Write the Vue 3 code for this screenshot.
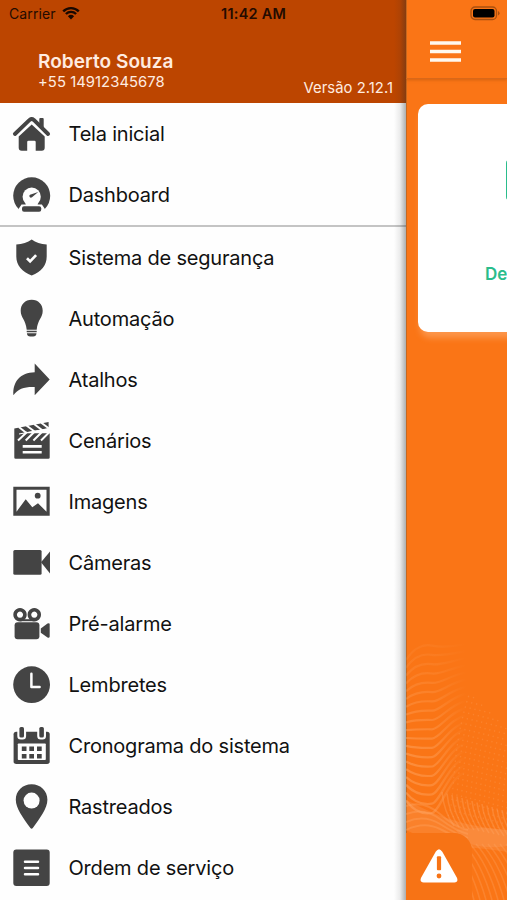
<script setup>
const mainItems = [
  { label: 'Tela inicial', icon: 'home' },
  { label: 'Dashboard', icon: 'gauge' },
]
const moreItems = [
  { label: 'Sistema de segurança', icon: 'shield' },
  { label: 'Automação', icon: 'bulb' },
  { label: 'Atalhos', icon: 'arrow' },
  { label: 'Cenários', icon: 'clapper' },
  { label: 'Imagens', icon: 'image' },
  { label: 'Câmeras', icon: 'camera' },
  { label: 'Pré-alarme', icon: 'film' },
  { label: 'Lembretes', icon: 'clock' },
  { label: 'Cronograma do sistema', icon: 'calendar' },
  { label: 'Rastreados', icon: 'pin' },
  { label: 'Ordem de serviço', icon: 'list' },
]

// icons are drawn in a 37 x 44 box; currentColor is the glyph, .w / .wl are knocked out in white
const icons = {
  home: `<path d="M1.900 22 16.600 7.900q2.100-1.800 4.200 0L35.100 22" fill="none" stroke="currentColor" stroke-width="3.900" stroke-linecap="round" stroke-linejoin="round"/>
    <path d="M26.300 12V7q0-1 1-1h2.400q1 0 1 1v10z"/>
    <path d="M18.700 12.500 31.700 24.500v11.200q0 3-3 3h-6V30q0-1.300-1.300-1.300h-5.900q-1.300 0-1.300 1.300v8.700H8.700q-3 0-3-3V24.500z"/>`,
  gauge: `<circle cx="18.700" cy="22.800" r="18.500"/><circle class="w" cx="18.700" cy="23.700" r="9.100"/>
    <path class="w" d="M14.500 29h8.400l2 2.500h4l3 4.500v7H5.500v-7l3-4.500h4z"/>
    <rect x="9" y="33.200" width="19.200" height="5.600" rx="2"/>
    <path d="M17 21.700 25.200 19 19 24.300a1.600 1.600 0 1 1-2-2.600z"/>`,
  shield: `<path d="M18.700 3.500c4 3 9 4.600 15 5v12c0 9-5.500 15.200-15 19-9.500-3.800-15.400-10-15.400-19v-12c6-.4 11.400-2 15.400-5z"/>
    <path class="wl" d="M14 22.300l3.100 3.100 6-6.300" stroke-width="2.700"/>`,
  bulb: `<path d="M18.700 2.700c6.600 0 11 4.700 11 11 0 7.300-5 8.500-6 19H13.700c-1-10.500-6-11.700-6-19 0-6.300 4.400-11 11-11z"/>
    <path d="M13.700 33.800h10v1.500h-10zM13.900 36.200h9.600q-.3 3.200-3.400 3.200h-2.800q-3.100 0-3.400-3.200z"/>`,
  arrow: `<path d="M21.700 5.600 36.700 21.600 21.700 37.300V29C12 28.600 5 30.500.4 37.300-.5 23.500 7.500 14.700 21.700 14.300z"/>`,
  clapper: `<path d="M1.300 9.400 35.600 2.900v6.300L9 14.300h27.700v24.100q0 1.300-1.300 1.300H2.600q-1.300 0-1.300-1.300z"/>
    <path class="wl" stroke-width="2" d="M5.800 8l8 6.200M13.500 6.500l8 6M21 5l8 6M28.300 3.700l8 6M5 21.500l9-8.500M12.700 21.500l8.500-8.500M20.400 21.500l8.500-8.500M28 21.500l8.500-8.500"/>
    <path class="wl" stroke-width="1" d="M6 15 37 9.300"/>
    <path class="wl" stroke-width="2.600" d="M9.700 27.400h19M9.700 33.300h19"/>`,
  image: `<path fill-rule="evenodd" d="M.3 6.700h36.400v29H.3zM3.500 9.700v22l9.200-12.500 6.600 8 5.700-4 8.500 8.500v-22z"/><circle cx="24.700" cy="15.700" r="2.900"/>`,
  camera: `<rect x=".3" y="9" width="28.300" height="24.700" rx="1.500"/><path d="M28 21.300 37 10.500v22z"/>`,
  film: `<path fill-rule="evenodd" d="M7 6a6.700 6.700 0 1 0 .01 0zM7 9.600a3.100 3.100 0 1 1-.01 0zM21.300 6a6.700 6.700 0 1 0 .01 0zM21.300 9.600a3.100 3.100 0 1 1-.01 0z"/>
    <path d="M7 17.200h14.300v2H7z"/>
    <rect x="1.600" y="20.300" width="24.800" height="17" rx="3"/><path d="M27.800 26.500 34.500 21.600q2.200-1 2.200.8v12.200q0 1.800-2.200.8L27.800 30.800z"/>`,
  clock: `<circle cx="18.600" cy="21.700" r="18.400"/><path class="wl" stroke-width="2.500" stroke-linecap="round" stroke-linejoin="round" d="M18.400 10.700v13.400h8.200"/>`,
  calendar: `<rect x=".6" y="7.700" width="36.100" height="32.300" rx="2.600"/>
    <rect class="w" x="4.300" y="1" width="8.800" height="14.500" rx="3.500"/><rect class="w" x="24.200" y="1" width="8.800" height="14.500" rx="3.500"/>
    <rect x="6.400" y="3" width="4.600" height="10.600" rx="1.600"/><rect x="26.300" y="3" width="4.600" height="10.600" rx="1.600"/>
    <rect class="w" x="4.800" y="19.400" width="28" height="16.600" rx=".8"/>
    <path d="M8.800 22.400h4.700v4.700H8.800zM16.300 22.400h4.700v4.700h-4.700zM24 22.400h4.700v4.700H24zM8.800 29.900h4.700v4.700H8.800zM16.300 29.900h4.700v4.700h-4.700zM24 29.900h4.700v4.700H24z"/>`,
  pin: `<path d="M18.600-.7c9 0 15.800 6.500 15.800 15.500 0 8.500-7.200 18-14.600 28.200q-1.200 1.300-2.400 0C10 32.800 2.800 23.300 2.800 14.800 2.800 5.800 9.600-.7 18.600-.7z"/><circle class="w" cx="18.600" cy="15.600" r="8"/>`,
  list: `<rect x=".3" y="3.500" width="36.400" height="36.600" rx="3"/><path class="wl" stroke-width="2.500" stroke-linecap="round" d="M12 15.700h13M12 22h13M12 28.300h13"/>`,
}

// contour lines of the background mesh: nearly flat at the top, sagging further down
const waves = Array.from({ length: 19 }, (_, i) => {
  const t = i / 18
  const y = 20 + i * 7.8
  const sag = -16 + t * 30
  const rise = -13 - t * 12
  return {
    d: `M0 ${y} C8 ${y + sag * 0.8} 18 ${y + sag} 26 ${y + sag * 0.9} S44 ${y + rise} 60 ${y + rise - 3}`,
    o: Math.min(0.12 + i * 0.03, 0.45),
  }
})
const dots = Array.from({ length: 17 }, (_, i) => ({
  d: `M${42 + i * 5} ${176 + i * 1.2} C${50 + i * 4} ${160 + i} ${44 + i * 5} ${110 + i} ${64 + i * 4} ${52 + i * 4}`,
}))
const ridges = Array.from({ length: 15 }, (_, i) => ({
  d: `M${36 + i * 5} ${152 + i * 1.5} Q${38 + i * 5} ${172 + i} ${48 + i * 5} ${186 + i}`,
}))
const folds = Array.from({ length: 4 }, (_, i) => ({
  d: `M0 ${166 + i * 8} Q18 ${160 + i * 7} 34 ${174 + i * 5} T62 ${190 + i * 4}`,
}))
const slopes = Array.from({ length: 12 }, (_, i) => ({
  d: `M${40 + i * 6} 204 Q${58 + i * 6} 224 ${68 + i * 6} 260`,
}))
</script>

<template>
  <div class="screen">
    <aside class="drawer">
      <header class="profile">
        <div class="status">
          <span class="carrier">Carrier</span>
          <svg class="wifi" viewBox="0 0 18 14" width="18" height="14">
            <path d="M1.200 5.300a11.200 11.200 0 0 1 15.600 0M3.900 8a7.300 7.300 0 0 1 10.200 0" fill="none" stroke="#180800" stroke-width="2.400" />
            <path d="M9 13.500 5.900 10.200a4.600 4.600 0 0 1 6.200 0z" fill="#180800" />
          </svg>
          <span class="time">11:42 AM</span>
        </div>
        <div class="user">
          <div>
            <div class="name">Roberto Souza</div>
            <div class="phone">+55 14912345678</div>
          </div>
          <div class="version">Versão 2.12.1</div>
        </div>
      </header>
      <nav class="menu">
        <div v-for="item in mainItems" :key="item.icon" class="item">
          <svg class="icon" viewBox="0 0 37 44" v-html="icons[item.icon]" />
          <span>{{ item.label }}</span>
        </div>
      </nav>
      <nav class="menu more">
        <div v-for="item in moreItems" :key="item.icon" class="item">
          <svg class="icon" viewBox="0 0 37 44" v-html="icons[item.icon]" />
          <span>{{ item.label }}</span>
        </div>
      </nav>
      <div class="edge"></div>
    </aside>

    <main class="page">
      <svg class="mesh" viewBox="0 0 101 260" width="101" height="260">
        <defs>
          <linearGradient id="fade" x1="0" y1="0" x2="60" y2="0" gradientUnits="userSpaceOnUse">
            <stop offset="0" stop-color="#ffab6b" />
            <stop offset=".5" stop-color="#ffab6b" stop-opacity=".8" />
            <stop offset="1" stop-color="#ffab6b" stop-opacity="0" />
          </linearGradient>
        </defs>
        <path d="M0 160C25 172 50 186 101 190V212C70 206 40 210 0 190z" fill="#fff" opacity=".09" />
        <path d="M50 190Q75 186 101 190V206Q80 210 58 202z" fill="#fff" opacity=".08" />
        <path v-for="(w, i) in waves" :key="'w' + i" :d="w.d" :opacity="w.o" fill="none" stroke="url(#fade)" stroke-width="2.200" />
        <path v-for="(r, i) in dots" :key="'d' + i" :d="r.d" fill="none" stroke="#ffa563" opacity=".27" stroke-width="1.300" stroke-dasharray="1.500 4" />
        <path v-for="(r, i) in ridges" :key="'r' + i" :d="r.d" fill="none" stroke="#ffa563" opacity=".35" stroke-width="1.600" />
        <path v-for="(r, i) in folds" :key="'f' + i" :d="r.d" fill="none" stroke="#ffa563" opacity=".35" stroke-width="2" />
        <path v-for="(r, i) in slopes" :key="'s' + i" :d="r.d" fill="none" stroke="#ffa563" opacity=".3" stroke-width="1.600" />
      </svg>
      <header class="topbar">
        <svg class="battery" viewBox="0 0 31 15" width="31" height="15">
          <rect x="1" y="1" width="25.500" height="12.500" rx="4" fill="none" stroke="#a95010" stroke-width="1.300" />
          <rect x="3" y="3" width="21.500" height="8.500" rx="2" fill="#000" />
          <path d="M28 5q3.200 2.200 0 4.500z" fill="#a95010" />
        </svg>
        <svg class="burger" viewBox="0 0 31 22" width="31" height="22">
          <path d="M0 2h31M0 10.500h31M0 19h31" stroke="#fff8ee" stroke-width="3.400" />
        </svg>
      </header>
      <section class="card">
        <div class="tile"></div>
        <div class="state">De</div>
      </section>
      <footer class="alert">
        <svg viewBox="0 0 38 34" width="38" height="34">
          <path d="M15.700 2.700q3.300-5 6.600 0L36.800 28.500q2 4.800-2.500 4.900H3.700Q-.8 33.300 1.200 28.500z" fill="#fff" />
          <rect x="16.900" y="7.300" width="4.200" height="14" rx="1" fill="#f77315" />
          <circle cx="19" cy="27" r="2.400" fill="#f77315" />
        </svg>
      </footer>
    </main>
  </div>
</template>

<style>
body {
  overflow: hidden;
}
</style>

<style scoped>
.screen {
  display: flex;
  width: 507px;
  height: 900px;
  overflow: hidden;
  background: #fff;
  font-family: Inter, 'Liberation Sans', sans-serif;
}
.drawer {
  position: relative;
  flex: 0 0 406px;
  background: #fefefe;
}
.edge {
  position: absolute;
  top: 0;
  right: 0;
  bottom: 0;
  width: 12px;
  background: linear-gradient(to right, rgba(40, 45, 45, 0), rgba(40, 45, 45, 0.09) 50%, rgba(40, 45, 45, 0.38));
}
.profile {
  height: 103px;
  background: #bc4500;
  box-sizing: border-box;
}
.status {
  display: flex;
  align-items: center;
  height: 27px;
  padding-left: 9px;
  color: #230b00;
  font-size: 14px;
}
.carrier {
  width: 53px;
  letter-spacing: 0.1px;
}
.wifi {
  margin-top: -1px;
}
.time {
  margin-left: 141px;
  font-weight: 600;
  font-size: 14.5px;
  letter-spacing: 0.25px;
  white-space: nowrap;
}
.user {
  display: flex;
  justify-content: space-between;
  padding: 23px 13px 0 38px;
  color: #ffece0;
}
.name {
  font-size: 19px;
  line-height: 24px;
  font-weight: 600;
  letter-spacing: 0.05px;
}
.phone {
  font-size: 14.8px;
  line-height: 17px;
  letter-spacing: 0.05px;
}
.version {
  padding-top: 30px;
  font-size: 14.8px;
  line-height: 17px;
  letter-spacing: 0.05px;
}
.menu {
  height: 122px;
}
.menu.more {
  height: auto;
  border-top: 2px solid #c4c4c4;
}
.item {
  display: flex;
  align-items: center;
  height: 61.05px;
  padding-left: 13px;
  gap: 18.5px;
  color: #111;
  font-size: 20px;
  letter-spacing: -0.2px;
  white-space: nowrap;
}
.icon {
  flex: none;
  width: 37px;
  height: 44px;
  overflow: visible;
  color: #444;
  fill: currentColor;
}
.icon :deep(.w) {
  fill: #fefefe;
}
.icon :deep(.wl) {
  fill: none;
  stroke: #fefefe;
}
.page {
  position: relative;
  display: flex;
  flex-direction: column;
  flex: 0 0 101px;
  overflow: hidden;
  background: #fa7516;
  box-shadow: inset 1px 0 #c5681f;
}
.mesh {
  position: absolute;
  left: 0;
  bottom: 0;
}
.topbar {
  display: flex;
  flex-direction: column;
  height: 79px;
  box-sizing: border-box;
  border-bottom: 1px solid #d96819;
  box-shadow: 0 1px 3px rgba(140, 60, 0, 0.35);
}
.battery {
  margin: 6px 0 0 64px;
}
.burger {
  margin: 20px 0 0 24px;
}
.card {
  width: 140px;
  height: 228px;
  box-sizing: border-box;
  margin: 25px 0 0 12px;
  padding-top: 56px;
  border-radius: 10px;
  background: #fff;
  box-shadow: 2px 6px 6px rgba(255, 190, 140, 0.45);
}
.tile {
  width: 50px;
  height: 40px;
  margin-left: 87.5px;
  border-radius: 3px;
  background: #2abd8c;
}
.state {
  margin: 64px 0 0 67px;
  color: #2abd8c;
  font-size: 17px;
  line-height: 20px;
  font-weight: 600;
}
.alert {
  position: relative;
  display: flex;
  width: 66px;
  height: 67px;
  margin-top: auto;
  padding: 16px 0 0 14px;
  box-sizing: border-box;
  border-radius: 0 18px 0 0;
  background: #f77315;
}
</style>
